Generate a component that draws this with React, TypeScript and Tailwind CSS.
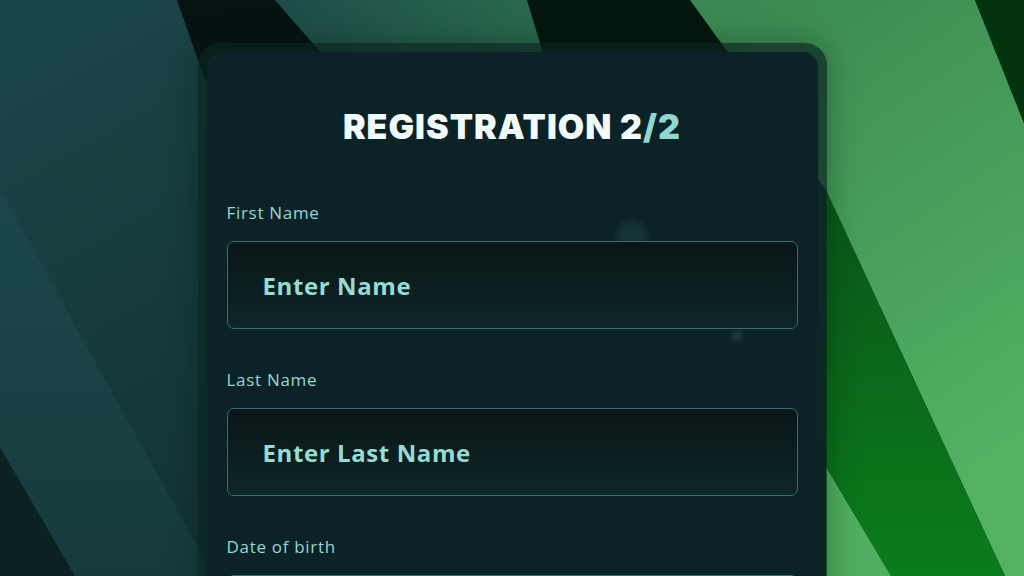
import React from 'react';

function Backdrop() {
  return (
    <svg className="absolute inset-0 h-full w-full" viewBox="0 0 1024 576" preserveAspectRatio="none">
      <defs>
        <linearGradient id="tealBase" x1="0" y1="0" x2="1" y2="1">
          <stop offset="0" stopColor="#1a4648" />
          <stop offset="1" stopColor="#0e2627" />
        </linearGradient>
        <linearGradient id="tealBand" x1="0" y1="0" x2="0" y2="1">
          <stop offset="0" stopColor="#1b474a" />
          <stop offset="1" stopColor="#163b3c" />
        </linearGradient>
        <linearGradient id="midStripe" x1="0" y1="0" x2="1" y2="0">
          <stop offset="0" stopColor="#1d4c49" />
          <stop offset="1" stopColor="#2c6c4e" />
        </linearGradient>
        <linearGradient id="green" x1="0" y1="0" x2="0.4" y2="1">
          <stop offset="0" stopColor="#3a8651" />
          <stop offset="1" stopColor="#52b262" />
        </linearGradient>
        <linearGradient id="darkGreen" x1="0" y1="0" x2="0" y2="1">
          <stop offset="0" stopColor="#0a5618" />
          <stop offset="1" stopColor="#0a7c1c" />
        </linearGradient>
      </defs>
      <rect width="1024" height="576" fill="url(#tealBase)" />
      <polygon points="0,190 205,560 205,576 0,576" fill="url(#tealBand)" />
      <polygon points="0,447 75,576 0,576" fill="#0c2121" />
      <polygon points="177,0 275,0 345,80 205,80" fill="#051312" />
      <polygon points="275,0 527,0 565,80 345,80" fill="url(#midStripe)" />
      <polygon points="527,0 690,0 770,110 560,110" fill="#04160f" />
      <polygon points="690,0 975,0 1024,123 1024,576 1005,576 826,190 770,110" fill="url(#green)" />
      <polygon points="975,0 1024,0 1024,123" fill="#04330f" />
      <polygon points="826,190 1005,576 891,576 826,467" fill="url(#darkGreen)" />
      <polygon points="826,467 891,576 826,576" fill="#4fae5f" />
    </svg>
  );
}

function Field({ label, placeholder }: { label: string; placeholder: string }) {
  return (
    <div className="flex flex-col gap-[18px]">
      <p className="text-[17px] leading-[20px] font-medium tracking-[0.7px] text-[#93d9d4]">{label}</p>
      <input
        type="text"
        placeholder={placeholder}
        className="block h-[88px] w-full rounded-[7px] border-[1.5px] border-[#2e716e] bg-gradient-to-b from-[#0a1617] to-[#0e2627] pl-[35px] text-[24px] font-bold tracking-[0.6px] text-[#94dcd6] outline-none placeholder:text-[#94dcd6]"
      />
    </div>
  );
}

export default function App() {
  return (
    <div className="relative h-[576px] w-full overflow-hidden bg-[#123435] font-['Open_Sans',sans-serif]">
      <Backdrop />

      <div className="relative mx-auto mt-[43px] w-[629px] rounded-[22px] bg-[#0a231e]/70 px-[9px] pt-[9px] shadow-[0_0_30px_rgba(0,20,10,0.35)]">
        <div className="relative overflow-hidden rounded-[15px] bg-[#0b2226] px-[20px] pt-[55px] pb-10">
          {/* faint blobs seen through the card */}
          <span className="absolute left-[410px] top-[168px] h-[30px] w-[30px] rounded-full bg-[#2d5a5a]/30 blur-[3px]" />
          <span className="absolute left-[524px] top-[278px] h-[12px] w-[12px] rounded-full bg-[#2d5a5a]/40 blur-[2px]" />

          <h1 className="relative text-center font-['Inter',sans-serif] text-[34px] leading-[40px] font-black tracking-[1px] text-[#f3fbfa]">
            REGISTRATION 2<span className="text-[#8fd8d2]">/2</span>
          </h1>

          <div className="relative mt-[56px] flex flex-col gap-[41px]">
            <Field label="First Name" placeholder="Enter Name" />
            <Field label="Last Name" placeholder="Enter Last Name" />
            <Field label="Date of birth" placeholder="DD/MM/YYYY" />
          </div>
        </div>
      </div>
    </div>
  );
}
